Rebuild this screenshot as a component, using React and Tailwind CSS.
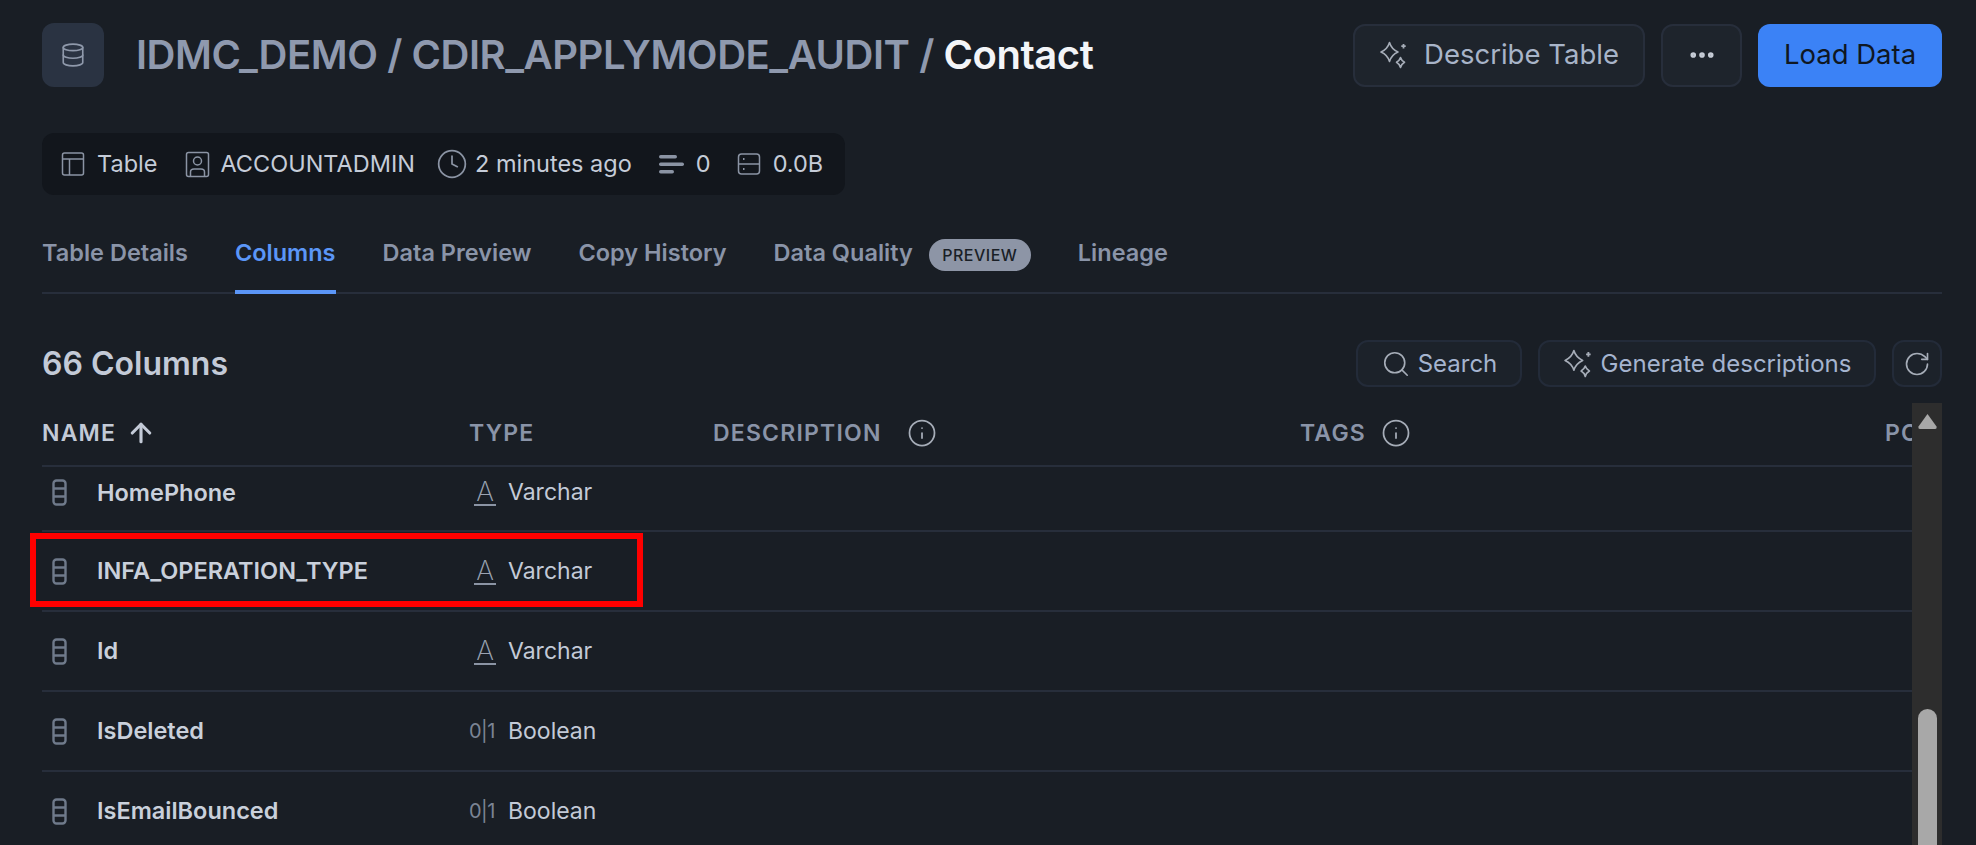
import React from 'react';
import { ArrowUp, Clock, Database, Info, MoreHorizontal, RotateCw, Search } from 'lucide-react';

const SparkleIcon = ({ className }) => (
    <svg viewBox="0 0 28 28" fill="none" stroke="currentColor" strokeWidth="1.6" strokeLinejoin="round" className={className}>
        <path d="M10.5 1.5 C11.8 6 14.5 9 19 11 C14.5 13 11.8 16 10.5 20.5 C9.2 16 6.5 13 2 11 C6.5 9 9.2 6 10.5 1.5 Z" />
        <path d="M21.5 16.5 C22.2 18.8 23.2 20 25.5 21.3 C23.2 22.6 22.2 23.8 21.5 26.5 C20.8 23.8 19.8 22.6 17.5 21.3 C19.8 20 20.8 18.8 21.5 16.5 Z" />
        <path d="M24.5 3 L24.5 7.5 M22.3 5.2 L26.7 5.2" strokeWidth="1.8" />
    </svg>
);

const TableIcon = () => (
    <svg viewBox="0 0 24 26" fill="none" stroke="currentColor" strokeWidth="1.5" className="w-[24px] h-[26px]">
        <rect x="1.5" y="2" width="21" height="22" rx="2" />
        <path d="M1.5 8 H22.5 M8.5 8 V24" />
    </svg>
);

const UserIcon = () => (
    <svg viewBox="0 0 25 27" fill="none" stroke="currentColor" strokeWidth="1.5" className="w-[25px] h-[27px]">
        <rect x="1.5" y="1.5" width="22" height="24" rx="2" />
        <circle cx="12.5" cy="10" r="4" />
        <path d="M5.5 25 V21 C5.5 19 7 18 9 18 H16 C18 18 19.5 19 19.5 21 V25" />
    </svg>
);

const RowsIcon = () => (
    <svg viewBox="0 0 26 24" fill="currentColor" className="w-[26px] h-[24px]">
        <rect x="1" y="3" width="18" height="3.4" rx="1.7" />
        <rect x="1" y="10.5" width="25" height="3.4" rx="1.7" />
        <rect x="1" y="18" width="15" height="3.4" rx="1.7" />
    </svg>
);

const SizeIcon = () => (
    <svg viewBox="0 0 24 26" fill="none" stroke="currentColor" strokeWidth="1.5" className="w-[24px] h-[26px]">
        <rect x="1.5" y="3" width="21" height="20" rx="3" />
        <path d="M1.5 13 H22.5" />
        <path d="M6 8 H7.5 M6 18 H7.5" strokeWidth="2" />
    </svg>
);

const ColumnIcon = () => (
    <svg viewBox="0 0 15 27" fill="none" stroke="currentColor" strokeWidth="2.4" className="w-[15px] h-[27px] text-[#6f7a8b]">
        <rect x="1.5" y="1.5" width="12" height="24" rx="3" />
        <path d="M1.5 9.5 H13.5 M1.5 17.5 H13.5" />
    </svg>
);

const tabs = ['Table Details', 'Columns', 'Data Preview', 'Copy History', 'Data Quality', 'Lineage'];

const columns = [
    { name: 'HomePhone', type: 'Varchar', first: true },
    { name: 'INFA_OPERATION_TYPE', type: 'Varchar' },
    { name: 'Id', type: 'Varchar' },
    { name: 'IsDeleted', type: 'Boolean' },
    { name: 'IsEmailBounced', type: 'Boolean' },
];

const TypeIcon = ({ type }) => {
    if (type === 'Boolean') {
        return <span className="w-[39px] shrink-0 text-[20px] text-[#7b8494] tracking-[-0.5px]">0|1</span>;
    }
    return (
        <span className="w-[39px] shrink-0 pl-[5px]">
            <span className="flex w-[22px] h-[27px] items-start justify-center border-b-2 border-[#8b94a4] text-[27px] font-extralight leading-[25px] text-[#9aa3b2]">A</span>
        </span>
    );
};

const Meta = ({ icon, children, className }) => (
    <div className={`flex items-center ${className || ''}`}>
        <span className="text-[#8b94a4]">{icon}</span>
        <span>{children}</span>
    </div>
);

const App = () => {
    return (
        <div className="relative h-[845px] overflow-hidden bg-[#191e25] pl-[42px] pr-[34px] pt-[23px] font-['Inter',sans-serif] text-[23.5px]">
            {/* page heading */}
            <div className="flex items-center h-[64px]">
                <div className="flex w-[62px] h-[64px] items-center justify-center rounded-xl bg-[#2a3342] text-[#8f99ab]">
                    <Database size={26} strokeWidth={1.5} />
                </div>
                <h1 className="ml-[32px] text-[40px] font-semibold tracking-[-0.45px] text-[#8f99ae]">
                    IDMC_DEMO / CDIR_APPLYMODE_AUDIT / <span className="text-[#f3f5f8]">Contact</span>
                </h1>
                <div className="ml-auto flex gap-[16px]">
                    <button className="flex w-[292px] h-[63px] items-center justify-center gap-[17px] rounded-xl border-2 border-[#272e3b] bg-[#1e242c] text-[27.5px] text-[#a8b4c8]">
                        <SparkleIcon className="w-[28px] h-[28px] text-[#a6adb8]" />
                        Describe Table
                    </button>
                    <button className="flex w-[81px] h-[63px] items-center justify-center rounded-xl border-2 border-[#272e3b] bg-[#1e242c] text-[#c6ccd6]">
                        <MoreHorizontal size={30} strokeWidth={2.5} />
                    </button>
                    <button className="w-[184px] h-[63px] rounded-xl bg-[#3b82f6] text-[27.5px] text-[#0f1722]">Load Data</button>
                </div>
            </div>

            {/* table meta */}
            <div className="mt-[46px] flex w-[803px] h-[62px] items-center rounded-xl bg-[#12161c] pl-[19px] text-[#c5ccd8]">
                <Meta icon={<TableIcon />} className="gap-[12px]">Table</Meta>
                <Meta icon={<UserIcon />} className="ml-[28px] gap-[10px]">ACCOUNTADMIN</Meta>
                <Meta icon={<Clock size={32} strokeWidth={1.3} />} className="ml-[21px] gap-[7px]">2 minutes ago</Meta>
                <Meta icon={<RowsIcon />} className="ml-[26px] gap-[12px]">0</Meta>
                <Meta icon={<SizeIcon />} className="ml-[26px] gap-[12px]">0.0B</Meta>
            </div>

            {/* tabs */}
            <div className="mt-[33px] flex gap-[47px] border-b-2 border-[#272e3b]">
                {tabs.map((tab) => (
                    <div
                        key={tab}
                        className={`-mb-[2px] flex gap-[16px] pb-[12px] leading-[50px] font-semibold ${
                            tab === 'Columns' ? 'border-b-4 border-[#5b96f7] pb-[8px] text-[#5b96f7]' : 'text-[#8a94a8]'
                        }`}
                    >
                        {tab}
                        {tab === 'Data Quality' && (
                            <span className="my-auto flex w-[102px] h-[32px] items-center justify-center rounded-full bg-[#8d95a6] text-[16px] font-medium tracking-[0.5px] text-[#1a1f26]">
                                PREVIEW
                            </span>
                        )}
                    </div>
                ))}
            </div>

            {/* columns toolbar */}
            <div className="mt-[46px] flex h-[47px] items-center">
                <h2 className="text-[32px] font-semibold text-[#c3cad7]">66 Columns</h2>
                <div className="ml-auto flex gap-[16px] text-[24px] text-[#a5b4cf]">
                    <button className="flex w-[166px] h-[47px] items-center justify-center gap-[7px] rounded-xl border-2 border-[#232b39] bg-[#1c222a]">
                        <Search size={30} strokeWidth={1.3} className="text-[#a6adb8]" />
                        Search
                    </button>
                    <button className="flex w-[338px] h-[47px] items-center justify-center gap-[9px] rounded-xl border-2 border-[#232b39] bg-[#1c222a]">
                        <SparkleIcon className="w-[29px] h-[29px] text-[#a6adb8]" />
                        Generate descriptions
                    </button>
                    <button className="flex w-[50px] h-[47px] items-center justify-center rounded-xl border-2 border-[#232b39] bg-[#1c222a] text-[#a6adb8]">
                        <RotateCw size={28} strokeWidth={1.4} />
                    </button>
                </div>
            </div>

            {/* columns table */}
            <div className="mt-[16px] flex h-[444px]">
                <div className="flex-1 min-w-0 overflow-hidden">
                    <div className="flex h-[64px] items-center whitespace-nowrap border-b-2 border-[#272e3b] pb-[2px] text-[23px] font-semibold tracking-[1.2px] text-[#8a94a8]">
                        <div className="flex w-[427px] shrink-0 items-center gap-[10px] text-[#c3cad7]">
                            NAME
                            <ArrowUp size={30} strokeWidth={2.5} />
                        </div>
                        <div className="w-[244px] shrink-0">TYPE</div>
                        <div className="flex w-[587px] shrink-0 items-center gap-[25px]">
                            DESCRIPTION
                            <Info size={30} strokeWidth={1.4} className="text-[#a6adb8]" />
                        </div>
                        <div className="flex w-[585px] shrink-0 items-center gap-[15px]">
                            TAGS
                            <Info size={30} strokeWidth={1.4} className="text-[#a6adb8]" />
                        </div>
                        <div className="shrink-0">POLICIES</div>
                    </div>
                    {columns.map((col) => (
                        <div
                            key={col.name}
                            className={`flex items-center border-b-2 border-[#272e3b] ${col.first ? 'h-[65px] pb-[12px]' : 'h-[80px]'}`}
                        >
                            <div className="flex w-[427px] shrink-0 items-center pl-[10px]">
                                <ColumnIcon />
                                <span className="ml-[30px] font-semibold text-[#c9d0db]">{col.name}</span>
                            </div>
                            <div className="flex items-center text-[23px] text-[#c3cad7]">
                                <TypeIcon type={col.type} />
                                {col.type}
                            </div>
                        </div>
                    ))}
                </div>
                {/* scrollbar */}
                <div className="flex w-[30px] shrink-0 flex-col items-center bg-[#2d2d2d] pt-[11px]">
                    <svg viewBox="0 0 19 15" fill="#a8a8a8" className="w-[19px] h-[15px]">
                        <path d="M9.5 0 L18.5 12.5 Q19 15 17 15 H2 Q0 15 0.5 12.5 Z" />
                    </svg>
                    <div className="mt-auto w-[19px] h-[138px] rounded-t-full bg-[#a8a8a8]" />
                </div>
            </div>

            {/* highlight annotation */}
            <div className="absolute left-[30px] top-[533px] w-[613px] h-[74px] border-[6px] border-[#ff0000]" />
        </div>
    );
};

export default App;
